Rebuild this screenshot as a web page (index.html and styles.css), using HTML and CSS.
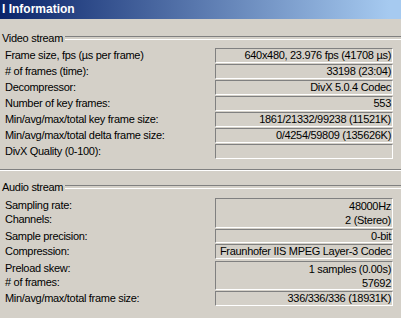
FILE: index.html
```html
<!DOCTYPE html>
<html lang="en">
<head>
    <meta charset="UTF-8">
    <title>Information</title>
    <link rel="stylesheet" href="styles.css">
</head>
<body>
    <div class="window">
        <div class="titlebar">I Information</div>

        <div class="group video-group">
            <div class="legend"><span>Video stream</span></div>
            <div class="row">
                <span class="label">Frame size, fps (µs per frame)</span>
                <span class="value">640x480, 23.976 fps (41708 µs)</span>
            </div>
            <div class="row">
                <span class="label"># of frames (time):</span>
                <span class="value">33198 (23:04)</span>
            </div>
            <div class="row">
                <span class="label">Decompressor:</span>
                <span class="value">DivX 5.0.4 Codec</span>
            </div>
            <div class="row">
                <span class="label">Number of key frames:</span>
                <span class="value">553</span>
            </div>
            <div class="row spaced">
                <span class="label">Min/avg/max/total key frame size:</span>
                <span class="value">1861/21332/99238 (11521K)</span>
            </div>
            <div class="row">
                <span class="label">Min/avg/max/total delta frame size:</span>
                <span class="value">0/4254/59809 (135626K)</span>
            </div>
            <div class="row">
                <span class="label">DivX Quality (0-100):</span>
                <span class="value"></span>
            </div>
        </div>

        <div class="group audio-group">
            <div class="legend"><span>Audio stream</span></div>
            <div class="row multi">
                <div class="labels">
                    <span class="label">Sampling rate:</span>
                    <span class="label">Channels:</span>
                </div>
                <div class="value">
                    <span>48000Hz</span>
                    <span>2 (Stereo)</span>
                </div>
            </div>
            <div class="row short">
                <span class="label">Sample precision:</span>
                <span class="value">0-bit</span>
            </div>
            <div class="row gap-before">
                <span class="label">Compression:</span>
                <span class="value">Fraunhofer IIS MPEG Layer-3 Codec</span>
            </div>
            <div class="row multi tall-gap">
                <div class="labels">
                    <span class="label">Preload skew:</span>
                    <span class="label"># of frames:</span>
                </div>
                <div class="value">
                    <span>1 samples (0.00s)</span>
                    <span>57692</span>
                </div>
            </div>
            <div class="row gap-before">
                <span class="label">Min/avg/max/total frame size:</span>
                <span class="value">336/336/336 (18931K)</span>
            </div>
        </div>
    </div>
</body>
</html>
```

FILE: styles.css
```css
:root {
    --face: #d4d0c8;
    --shadow: #808080;
    --light: #ffffff;
    --title-dark: #0a246a;
    --title-light: #a6caf0;
}

* {
    box-sizing: border-box;
    margin: 0;
    padding: 0;
}

body {
    width: 401px;
    height: 318px;
    overflow: hidden;
    background-color: var(--face);
    font-family: 'Liberation Sans', Arial, sans-serif;
    font-size: 11px;
    letter-spacing: -0.3px;
    color: #000;
}

.window {
    width: 401px;
}

.titlebar {
    height: 19px;
    line-height: 19px;
    padding-left: 2px;
    background: linear-gradient(to right, var(--title-dark), var(--title-light) 97%);
    color: var(--light);
    font-size: 12px;
    font-weight: bold;
    letter-spacing: 0;
}

/* group box: legend line on top, etched line at bottom */
.group {
    padding-bottom: 9px;
}

.video-group {
    margin-top: 12px;
    border-bottom: 1px solid var(--shadow);
    box-shadow: 0 1px 0 var(--light);
}

.audio-group {
    margin-top: 10px;
}

.legend {
    display: flex;
    align-items: center;
    height: 14px;
    padding-left: 2px;
    margin-bottom: 3px;
}

.legend span {
    line-height: 14px;
    padding-right: 2px;
}

.legend::after {
    content: '';
    flex: 1;
    height: 2px;
    border-top: 1px solid var(--shadow);
    border-bottom: 1px solid var(--light);
}

.audio-group .legend {
    margin-bottom: 4px;
}

.row {
    display: flex;
    height: 15px;
    margin-bottom: 1px;
    padding-left: 5px;
    padding-right: 8px;
}

.row.spaced {
    margin-top: 1px;
}

.label {
    flex: 1;
    line-height: 15px;
    white-space: nowrap;
}

.value {
    width: 178px;
    height: 100%;
    border-top: 1px solid var(--shadow);
    border-left: 1px solid var(--shadow);
    border-bottom: 1px solid var(--light);
    border-right: 1px solid var(--light);
    padding-right: 1px;
    text-align: right;
    line-height: 13px;
    white-space: nowrap;
}

.row.short {
    height: 14px;
    margin-top: 0;
}

.row.short .value {
    line-height: 12px;
}

.row.gap-before {
    margin-top: 1px;
}

.row.multi {
    height: 30px;
}

.row.multi .labels {
    flex: 1;
    display: flex;
    flex-direction: column;
}

.row.multi .labels .label {
    flex: none;
    line-height: 14px;
}

.row.multi .value {
    display: flex;
    flex-direction: column;
}

.row.multi .value span {
    line-height: 14px;
}

.row.tall-gap {
    margin-top: 2px;
    height: 29px;
}
```
